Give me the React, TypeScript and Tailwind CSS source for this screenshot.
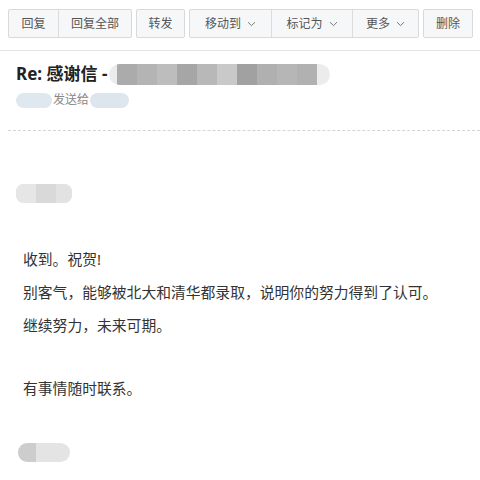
import React from "react";

const Chevron = () => (
  <svg width="9" height="6" viewBox="0 0 9 6" className="ml-[6px] mt-[1px]" fill="none">
    <path d="M1 1.2 L4.5 4.6 L8 1.2" stroke="#777" strokeWidth="1" />
  </svg>
);

function Btn({ w, label, chevron, cls }: { w: string; label: string; chevron?: boolean; cls: string }) {
  return (
    <div className={`${w} ${cls} h-full flex items-center justify-center`}>
      <span>{label}</span>
      {chevron && <Chevron />}
    </div>
  );
}

const blocks = ["#ababab", "#b4b4b4", "#bdbdbd", "#a6a6a6", "#b8b8b8", "#c9c9c9", "#a1a1a1", "#b0b0b0", "#b6b6b6", "#b1b1b1"];

export default function App() {
  return (
    <div
      className="w-[480px] h-[480px] bg-white overflow-hidden text-[#333]"
      style={{ fontFamily: '"Noto Sans", "Noto Sans CJK SC", sans-serif' }}
    >
      {/* toolbar */}
      <div className="h-[51px] border-b border-[#e3e3e3] pt-[9px] pl-[8px] flex gap-[4px] text-[12px] text-[#555]">
        <div className="h-[29px] flex border border-[#d9d9d9] rounded-[2px] bg-[#f6f7f8]">
          <Btn w="w-[50px]" label="回复" cls="border-r border-[#dcdcdc]" />
          <Btn w="w-[72px]" label="回复全部" cls="" />
        </div>
        <div className="h-[29px] flex border border-[#d9d9d9] rounded-[2px] bg-[#f6f7f8]">
          <Btn w="w-[47px]" label="转发" cls="" />
        </div>
        <div className="h-[29px] flex border border-[#d9d9d9] rounded-[2px] bg-[#f6f7f8]">
          <Btn w="w-[82px]" label="移动到" chevron cls="border-r border-[#dcdcdc]" />
          <Btn w="w-[81px]" label="标记为" chevron cls="border-r border-[#dcdcdc]" />
          <Btn w="w-[65px]" label="更多" chevron cls="" />
        </div>
        <div className="h-[29px] flex border border-[#d9d9d9] rounded-[2px] bg-[#f6f7f8]">
          <Btn w="w-[48px]" label="删除" cls="" />
        </div>
      </div>

      {/* header */}
      <div className="ml-[8px] border-b border-dashed border-[#d4d4d4] pl-[8px] pt-[11px] pb-[22px]">
        <div className="flex items-center h-[24px]">
          <span className="text-[17px] font-bold text-[#222] leading-[24px]">Re: 感谢信 -</span>
          <div className="ml-[2px] flex h-[21px] rounded-full bg-[#ececec] overflow-hidden pl-[8px] pr-[13px]">
            {blocks.map((c, i) => (
              <div key={i} className="w-[20px] h-full" style={{ background: c }} />
            ))}
          </div>
        </div>
        <div className="mt-[6px] flex items-center h-[16px] text-[12px] text-[#888]">
          <div className="w-[36px] h-[15px] rounded-full bg-[#dfe8ee]" />
          <span className="mx-[1px] leading-[16px]">发送给</span>
          <div className="w-[39px] h-[15px] rounded-full bg-[#dce6ec]" />
        </div>
      </div>

      {/* body */}
      <div className="pt-[53px]">
        <div className="ml-[16px] w-[56px] h-[19px] rounded-[8px] flex overflow-hidden bg-[#e3e3e3]">
          <div className="w-[20px] h-full bg-[#e6e6e6]" />
          <div className="w-[20px] h-full bg-[#d9d9d9]" />
          <div className="flex-1 h-full bg-[#e2e2e2]" />
        </div>
        <div className="pl-[23px] pt-[40px] text-[14.8px] text-[#333]">
          <p className="leading-[33px]">收到。祝贺!</p>
          <p className="leading-[33px]">别客气，能够被北大和清华都录取，说明你的努力得到了认可。</p>
          <p className="leading-[33px]">继续努力，未来可期。</p>
          <div className="h-[30px]" />
          <p className="leading-[33px]">有事情随时联系。</p>
        </div>
        <div className="mt-[38px] ml-[18px] w-[52px] h-[19px] rounded-full flex overflow-hidden bg-[#e4e4e4]">
          <div className="w-[18px] h-full bg-[#cdcdcd]" />
        </div>
      </div>
    </div>
  );
}
